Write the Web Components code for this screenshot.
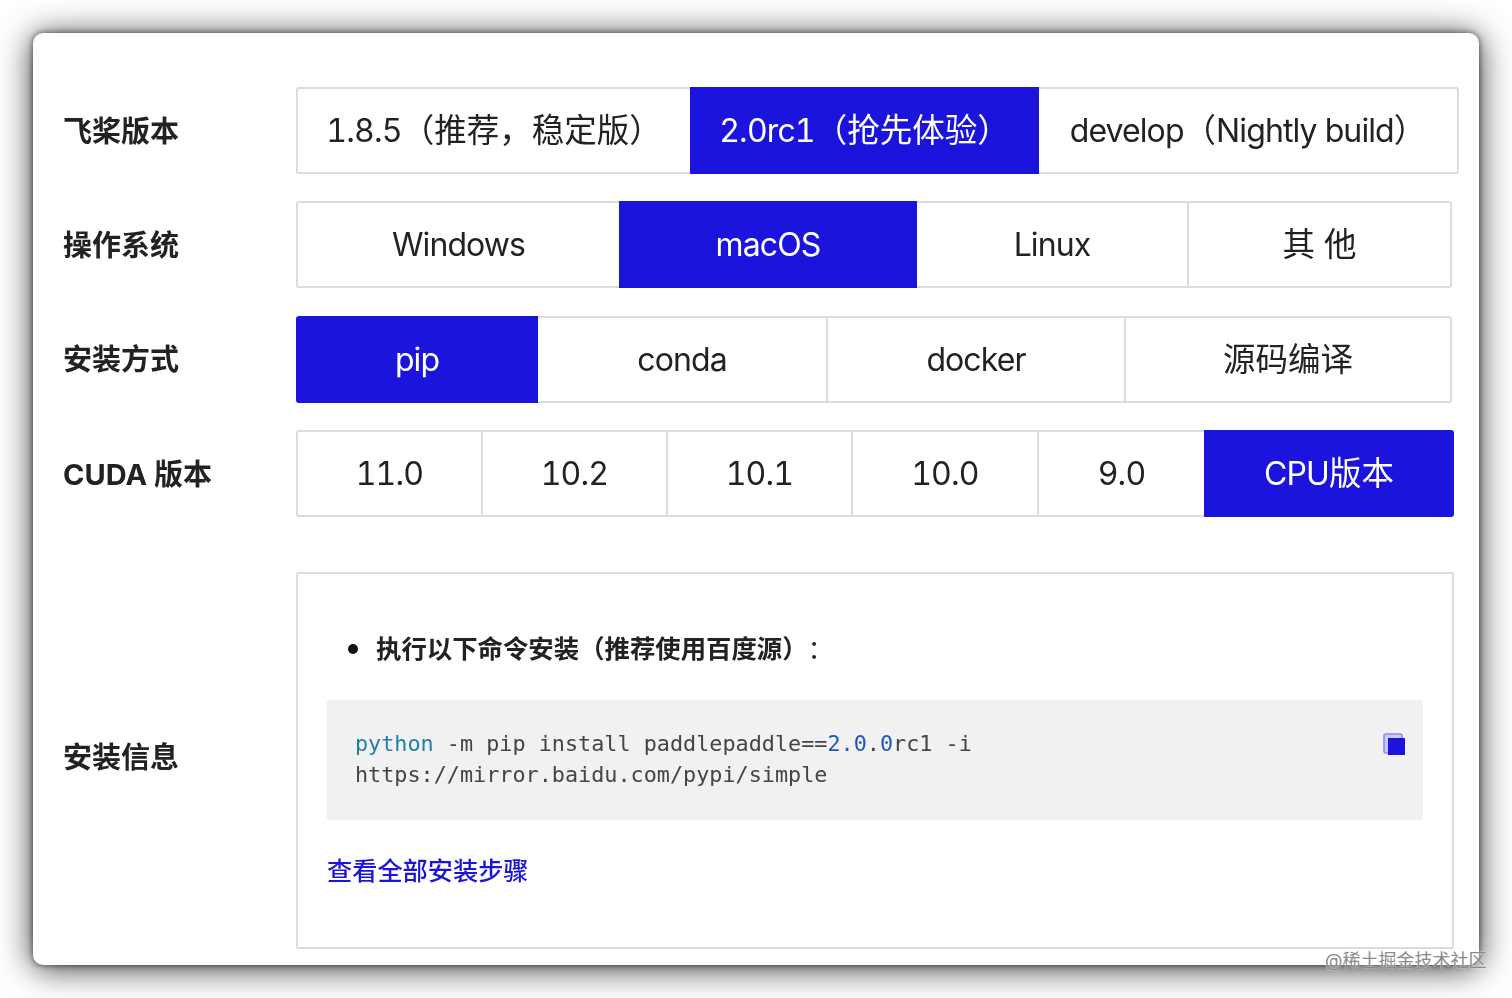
<!DOCTYPE html>
<html lang="zh">
<head>
<meta charset="utf-8">
<title>飞桨安装</title>
<style>
  html, body { margin: 0; height: 998px; overflow: hidden; background: #fff; }
  body { font-family: "Inter", "Noto Sans CJK SC", sans-serif; color: #222; }
</style>
</head>
<body>
<install-card>
  <opt-row label="飞桨版本">
    <opt-item w="394" first><span class="n">1.8.5</span>（推荐，稳定版）</opt-item>
    <opt-item w="349" on><span class="n">2.0</span><span class="t">rc</span><span class="n">1</span>（抢先体验）</opt-item>
    <opt-item w="420" last><span class="t">develop</span>（<span class="t">Nightly build</span>）</opt-item>
  </opt-row>
  <opt-row label="操作系统">
    <opt-item w="323" first><span class="t">Windows</span></opt-item>
    <opt-item w="298" on><span class="t">macOS</span></opt-item>
    <opt-item w="270"><span class="t">Linux</span></opt-item>
    <opt-item w="265" last>其 他</opt-item>
  </opt-row>
  <opt-row label="安装方式">
    <opt-item w="242" on first><span class="t">pip</span></opt-item>
    <opt-item w="288"><span class="t">conda</span></opt-item>
    <opt-item w="298"><span class="t">docker</span></opt-item>
    <opt-item w="328" last>源码编译</opt-item>
  </opt-row>
  <opt-row label="CUDA 版本">
    <opt-item w="185" first><span class="n">11.0</span></opt-item>
    <opt-item w="185"><span class="n">10.2</span></opt-item>
    <opt-item w="185"><span class="n">10.1</span></opt-item>
    <opt-item w="186"><span class="n">10.0</span></opt-item>
    <opt-item w="167"><span class="n">9.0</span></opt-item>
    <opt-item w="250" on last><span class="t">CPU</span>版本</opt-item>
  </opt-row>
  <info-panel label="安装信息">
    <code-block></code-block>
  </info-panel>
</install-card>
<water-mark>@稀土掘金技术社区</water-mark>

<script>
  // small helper, every element just sets its shadow markup once
  class Base extends HTMLElement {
    render(html) {
      if (!this.shadowRoot) this.attachShadow({ mode: 'open' });
      this.shadowRoot.innerHTML = html;
    }
  }

  class InstallCard extends Base {
    connectedCallback() {
      this.render(`
        <style>
          :host { display: block; box-sizing: border-box; width: 1446px; height: 932px; margin: 33px 0 0 33px;
                  padding: 54px 0 0 30px; background: #fff; border-radius: 10px;
                  box-shadow: 0 0 6px rgba(0,0,0,.6), 0 3px 34px rgba(0,0,0,.8); }
          .soft { filter: blur(.45px); }
        </style>
        <div class="soft"><slot></slot></div>`);
    }
  }

  class OptRow extends Base {
    connectedCallback() {
      this.render(`
        <style>
          :host { display: flex; align-items: stretch; height: 87px; margin-bottom: 27.4px; }
          .label { width: 233px; flex: none; display: flex; align-items: center; box-sizing: border-box; padding-top: 2px;
                   font-size: 29px; line-height: 40px; font-weight: 700; color: #222; }
          .seg { display: flex; }
        </style>
        <div class="label">${this.getAttribute('label')}</div>
        <div class="seg"><slot></slot></div>`);
    }
  }

  class OptItem extends Base {
    connectedCallback() {
      const on = this.hasAttribute('on');
      const first = this.hasAttribute('first');
      const last = this.hasAttribute('last');
      const prev = this.previousElementSibling;
      const noLeft = !first && !on && prev && prev.hasAttribute('on');
      const r = first ? '3px 0 0 3px' : last ? '0 3px 3px 0' : '0';
      this.render(`
        <style>
          :host { display: flex; box-sizing: border-box; width: ${this.getAttribute('w')}px; height: 87px;
                  align-items: center; justify-content: center; white-space: nowrap; padding-top: 1px;
                  font-size: 32.5px; line-height: 40px; color: ${on ? '#fff' : '#222'};
                  background: ${on ? '#1b14dc' : '#fff'}; border-radius: ${r};
                  border: 2px solid ${on ? '#1b14dc' : '#dcdcdc'};
                  border-right-width: ${last || on ? 2 : 0}px; border-left-width: ${noLeft ? 0 : 2}px; }
          ::slotted(.t) { font-size: 32px; letter-spacing: -.9px; }
          ::slotted(.n) { font-size: 32px; font-feature-settings: "tnum"; letter-spacing: -.8px; }
        </style>
        <slot></slot>`);
    }
  }

  class InfoPanel extends Base {
    connectedCallback() {
      // margin collapses with the last row's 27.4px, so this is the whole gap
      this.render(`
        <style>
          :host { display: flex; height: 377px; margin-top: 54.8px; }
          .label { width: 233px; flex: none; display: flex; align-items: center; font-size: 29px; line-height: 40px; font-weight: 700; color: #222; padding-bottom: 4px; box-sizing: border-box; }
          .box { box-sizing: border-box; width: 1158px; border: 2px solid #dcdcdc; border-radius: 2px; padding: 54px 29px 0; }
          .li { display: flex; align-items: center; height: 40px; font-size: 25.4px; line-height: 40px; font-weight: 700; color: #222; padding-left: 21px; gap: 18px; text-spacing-trim: space-all; }
          .dot { width: 10px; height: 10px; border-radius: 50%; background: #111; flex: none; margin-top: 2px; }
          .colon { font-family: "Noto Sans CJK TC", sans-serif; font-weight: 400; }
          a { display: block; margin-top: 34px; font-size: 25.2px; font-weight: 500; color: #1b14dc; text-decoration: none; line-height: 34px; }
        </style>
        <div class="label">${this.getAttribute('label')}</div>
        <div class="box">
          <div class="li"><span class="dot"></span><span>执行以下命令安装（推荐使用百度源）<span class="colon">：</span></span></div>
          <slot></slot>
          <a href="#">查看全部安装步骤</a>
        </div>`);
    }
  }

  class CodeBlock extends Base {
    connectedCallback() {
      this.render(`
        <style>
          :host { display: flex; box-sizing: border-box; height: 120px; margin-top: 32px; padding: 28px 17px 0 28px;
                  background: #f1f1f1; justify-content: space-between; align-items: flex-start; }
          pre { margin: 0; font: 21.8px/31px "DejaVu Sans Mono", monospace; color: #444; }
          .kw { color: #1f7fa8; } .num { color: #1f55c0; }
          svg { display: block; margin-top: 5px; }
        </style>
        <pre><span class="kw">python</span> -m pip install paddlepaddle==<span class="num">2.0</span>.<span class="num">0</span>rc1 -i
https://mirror.baidu.com/pypi/simple</pre>
        <svg width="23" height="23" viewBox="0 0 23 23">
          <rect x="1" y="1" width="18" height="19" rx="2" fill="#c9c8f6" stroke="#8f8bec" stroke-width="1.6"/>
          <rect x="5" y="5" width="17" height="17" fill="#1b14dc"/>
        </svg>`);
    }
  }

  class WaterMark extends Base {
    connectedCallback() {
      this.render(`
        <style>
          :host { position: absolute; left: 1325px; top: 948px; font-size: 18px; line-height: 25px; white-space: nowrap;
                  color: #8a8a8a; text-shadow: 0 0 2px #fff; }
        </style>
        <slot></slot>`);
    }
  }

  customElements.define('install-card', InstallCard);
  customElements.define('opt-row', OptRow);
  customElements.define('opt-item', OptItem);
  customElements.define('info-panel', InfoPanel);
  customElements.define('code-block', CodeBlock);
  customElements.define('water-mark', WaterMark);
</script>
</body>
</html>
